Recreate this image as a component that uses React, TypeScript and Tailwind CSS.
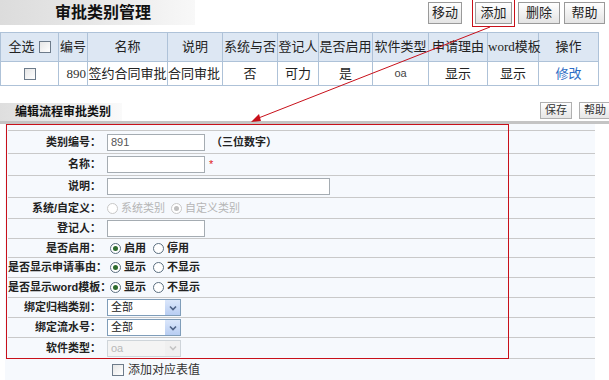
import React from "react";

const COLS = [
  { title: "全选", w: "w-[58px]" },
  { title: "编号", w: "w-[29px]" },
  { title: "名称", w: "w-[80px]" },
  { title: "说明", w: "w-[55px]" },
  { title: "系统与否", w: "w-[55px]" },
  { title: "登记人", w: "w-[41px]" },
  { title: "是否启用", w: "w-[54px]" },
  { title: "软件类型", w: "w-[56px]" },
  { title: "申请理由", w: "w-[59px]" },
  { title: "word模板", w: "w-[51px]" },
  { title: "操作", w: "w-[60px]" },
];

function Btn({ label, w, active = false }: { label: string; w: string; active?: boolean }) {
  return (
    <div
      className={`${w} h-[22px] flex items-center justify-center text-[13px] text-[#222] border border-[#9a9a9a] bg-gradient-to-b from-white to-[#e4e4e4] ${
        active ? "outline outline-1 outline-[#c8101a] outline-offset-[2px]" : ""
      }`}
    >
      {label}
    </div>
  );
}

function SmallBtn({ label }: { label: string }) {
  return (
    <div className="h-[17px] px-[4px] flex items-center text-[11px] text-[#333] border border-[#b0b0b0] bg-gradient-to-b from-white to-[#e6e6e6]">
      {label}
    </div>
  );
}

function Box() {
  return <span className="inline-block w-[12px] h-[12px] border border-[#6d7b8a] bg-gradient-to-br from-[#e6e6e6] to-white" />;
}

function Radio({ checked = false, disabled = false, label }: { checked?: boolean; disabled?: boolean; label: string }) {
  return (
    <span className={`flex items-center gap-[3px] ${disabled ? "text-[#b5b5b5] font-normal" : "text-[#222] font-bold"}`}>
      <span
        className={`w-[11px] h-[11px] rounded-full border flex items-center justify-center bg-white ${
          disabled ? "border-[#c8c8c8]" : "border-[#5b6f80]"
        }`}
      >
        {checked && <span className={`w-[5px] h-[5px] rounded-full ${disabled ? "bg-[#c0c0c0]" : "bg-[#2f6b2f]"}`} />}
      </span>
      {label}
    </span>
  );
}

function TextInput({ w, value = "" }: { w: string; value?: string }) {
  return (
    <div className={`${w} h-[17px] border border-[#a5acb2] bg-white text-[11px] text-[#555] px-[3px] flex items-center`}>
      {value}
    </div>
  );
}

function Select({ value, disabled = false }: { value: string; disabled?: boolean }) {
  return (
    <div
      className={`w-[74px] h-[17px] border flex items-center justify-between text-[11px] ${
        disabled ? "border-[#cfd5da] bg-[#f4f4f4] text-[#b8b8b8]" : "border-[#7f9db9] bg-white text-[#222]"
      }`}
    >
      <span className="pl-[3px]">{value}</span>
      <span
        className={`w-[15px] h-[15px] flex items-center justify-center ${
          disabled ? "bg-[#f0f0f0]" : "bg-gradient-to-b from-[#dbe7fb] to-[#b8cdf2]"
        }`}
      >
        <svg width="8" height="6" viewBox="0 0 8 6">
          <path d="M1 1.5 L4 4.5 L7 1.5" fill="none" stroke={disabled ? "#c4c4c4" : "#4d6185"} strokeWidth="1.6" />
        </svg>
      </span>
    </div>
  );
}

function Row({ label, h, children }: { label: string; h: string; children?: React.ReactNode }) {
  return (
    <div className={`flex items-center ${h} border-b border-[#c9c9c9]`}>
      <div className="w-[93px] text-right text-[11px] font-bold text-[#222] whitespace-nowrap">{label}</div>
      <div className="ml-[6px] flex items-center gap-[2px] text-[11px]">{children}</div>
    </div>
  );
}

export default function App() {
  return (
    <div className="relative w-[609px] h-[380px] bg-white overflow-hidden font-['Liberation_Sans','Noto_Sans_CJK_SC',sans-serif] text-[#222]">
      {/* 顶部标题与按钮 */}
      <div className="flex justify-between items-start h-[32px]">
        <div className="w-[195px] h-[25px] pl-[55px] flex items-center bg-gradient-to-r from-[#dcdcdc] via-[#e8e8e8] to-[#f8f8f8] text-[16px] font-bold text-[#111]">
          审批类别管理
        </div>
        <div className="flex items-center pt-[2px] pr-[4px]">
          <Btn label="移动" w="w-[34px]" />
          <div className="w-[13px]" />
          <Btn label="添加" w="w-[37px]" active />
          <div className="w-[6px]" />
          <Btn label="删除" w="w-[42px]" />
          <div className="w-[4px]" />
          <Btn label="帮助" w="w-[41px]" />
        </div>
      </div>

      {/* 列表 */}
      <table className="border-collapse w-[598px] table-fixed text-[13px]">
        <thead>
          <tr className="h-[29px] bg-[#dde7f3]">
            {COLS.map((c, i) => (
              <th
                key={i}
                className={`${c.w} border border-[#aec2d8] font-normal text-[#222] whitespace-nowrap p-0 ${
                  c.title === "word模板" ? "font-['Liberation_Serif','Noto_Sans_CJK_SC',serif]" : ""
                }`}
              >
                {i === 0 ? (
                  <span className="flex items-center justify-center gap-[4px]">
                    全选 <Box />
                  </span>
                ) : (
                  c.title
                )}
              </th>
            ))}
          </tr>
        </thead>
        <tbody>
          <tr className="h-[24px] bg-white text-center">
            <td className="border border-[#aec2d8]">
              <span className="flex justify-center">
                <Box />
              </span>
            </td>
            <td className="border border-[#aec2d8] text-right pr-[1px] text-[#333] font-['Liberation_Serif',serif]">890</td>
            <td className="border border-[#aec2d8] whitespace-nowrap">签约合同审批</td>
            <td className="border border-[#aec2d8] text-left whitespace-nowrap">合同审批</td>
            <td className="border border-[#aec2d8]">否</td>
            <td className="border border-[#aec2d8]">可力</td>
            <td className="border border-[#aec2d8]">是</td>
            <td className="border border-[#aec2d8] text-[11px] text-[#444]">oa</td>
            <td className="border border-[#aec2d8]">显示</td>
            <td className="border border-[#aec2d8]">显示</td>
            <td className="border border-[#aec2d8] text-[#2c6cc4]">修改</td>
          </tr>
        </tbody>
      </table>

      {/* 编辑区标题 */}
      <div className="mt-[14px] flex justify-between items-end h-[21px]">
        <div className="w-[122px] h-[18px] pl-[15px] flex items-center bg-gradient-to-r from-[#dedede] via-[#ebebeb] to-[#fafafa] text-[12px] font-bold text-[#111]">
          编辑流程审批类别
        </div>
        <div className="flex items-center gap-[7px] mb-[2px] mr-[-2px]">
          <SmallBtn label="保存" />
          <SmallBtn label="帮助" />
        </div>
      </div>
      <div className="h-[3px] bg-[#c4c4c4]" />

      {/* 表单 */}
      <div className="ml-[5px] w-[590px] bg-[#f6f9fd] pt-[6px] pl-[3px]">
        <div className="border-t border-[#c9c9c9]">
          <Row label="类别编号：" h="h-[23px]">
            <TextInput w="w-[98px]" value="891" />
            <span className="ml-[4px] font-bold">（三位数字）</span>
          </Row>
          <Row label="名称：" h="h-[22px]">
            <TextInput w="w-[98px]" />
            <span className="ml-[2px] text-[#e02020]">*</span>
          </Row>
          <Row label="说明：" h="h-[22px]">
            <TextInput w="w-[223px]" />
          </Row>
          <Row label="系统/自定义：" h="h-[21px]">
            <span className="flex items-center gap-[6px]">
              <Radio disabled label="系统类别" />
              <Radio disabled checked label="自定义类别" />
            </span>
          </Row>
          <Row label="登记人：" h="h-[20px]">
            <TextInput w="w-[98px]" />
          </Row>
          <Row label="是否启用：" h="h-[19px]">
            <span className="flex items-center gap-[7px] ml-[3px]">
              <Radio checked label="启用" />
              <Radio label="停用" />
            </span>
          </Row>
          <Row label="是否显示申请事由：" h="h-[20px]">
            <span className="flex items-center gap-[7px] ml-[3px]">
              <Radio checked label="显示" />
              <Radio label="不显示" />
            </span>
          </Row>
          <Row label="是否显示word模板：" h="h-[20px]">
            <span className="flex items-center gap-[7px] ml-[3px]">
              <Radio checked label="显示" />
              <Radio label="不显示" />
            </span>
          </Row>
          <Row label="绑定归档类别：" h="h-[20px]">
            <Select value="全部" />
          </Row>
          <Row label="绑定流水号：" h="h-[20px]">
            <Select value="全部" />
          </Row>
          <Row label="软件类型：" h="h-[21px]">
            <Select value="oa" disabled />
          </Row>
        </div>
        <div className="h-[22px] flex items-center pl-[104px] gap-[4px] text-[12px] text-[#333]">
          <Box />
          添加对应表值
        </div>
      </div>

      {/* 标注：红框与箭头 */}
      <div className="absolute left-[6px] top-[124px] w-[503px] h-[235px] border border-[#c8101a] pointer-events-none" />
      <svg className="absolute left-0 top-0 pointer-events-none" width="609" height="380">
        <line x1="490" y1="27" x2="256" y2="119" stroke="#c8101a" strokeWidth="1" />
        <path d="M251 122 L259 114 L261 121 Z" fill="#c8101a" />
      </svg>
    </div>
  );
}
